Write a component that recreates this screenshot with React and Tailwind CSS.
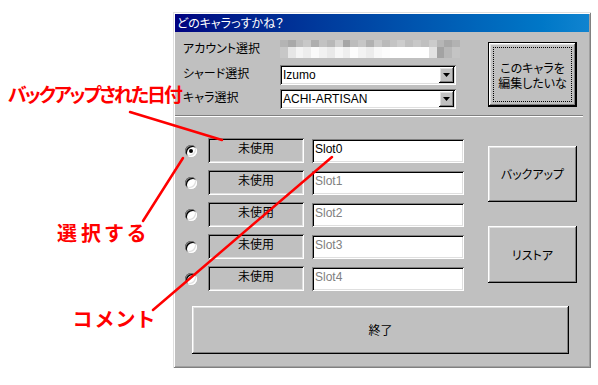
import React from 'react';

const jp = "font-['Noto_Sans_CJK_JP',sans-serif] [font-feature-settings:'palt']";
const raised =
  'shadow-[inset_-1px_-1px_#000,inset_1px_1px_#fff,inset_-2px_-2px_#808080,inset_2px_2px_#dfdfdf]';
const sunken =
  'shadow-[inset_1px_1px_#808080,inset_-1px_-1px_#fff,inset_2px_2px_#000,inset_-2px_-2px_#dfdfdf]';

const mosaicTop = [
  'bg-[#b4b4b4]', 'bg-[#a9a9a9]', 'bg-[#bdbdbd]', 'bg-[#c8c8c8]', 'bg-[#aeaeae]', 'bg-[#c2c2c2]',
  'bg-[#b8b8b8]', 'bg-[#cfcfcf]', 'bg-[#a6a6a6]', 'bg-[#bcbcbc]', 'bg-[#c6c6c6]', 'bg-[#b1b1b1]',
  'bg-[#c9c9c9]', 'bg-[#bababa]', 'bg-[#c4c4c4]', 'bg-[#cdcdcd]', 'bg-[#bfbfbf]', 'bg-[#c8c8c8]',
  'bg-[#c0c0c0]', 'bg-[#cbcbcb]', 'bg-[#b6b6b6]', 'bg-[#a8a8a8]', 'bg-[#b2b2b2]',
];
const mosaicBottom = [
  'bg-[#c7c7c7]', 'bg-[#e6e6e6]', 'bg-[#f4f4f4]', 'bg-[#ededed]', 'bg-[#fafafa]', 'bg-[#f1f1f1]',
  'bg-[#e9e9e9]', 'bg-[#f7f7f7]', 'bg-[#efefef]', 'bg-[#fdfdfd]', 'bg-[#f3f3f3]', 'bg-[#ececec]',
  'bg-[#f8f8f8]', 'bg-[#fcfcfc]', 'bg-white', 'bg-white', 'bg-white', 'bg-white',
  'bg-white', 'bg-[#e2e2e2]', 'bg-[#a3a3a3]', 'bg-[#b7b7b7]', 'bg-[#c4c4c4]',
];

function Combo({ value }) {
  return (
    <div className={`w-[176px] h-[20px] bg-white ${sunken} flex items-center`}>
      <span className="flex-1 pl-[3px] text-[12px] leading-[14px] text-black font-['Liberation_Sans',sans-serif]">
        {value}
      </span>
      <div className={`w-[15px] h-[16px] mr-[2px] bg-[#c0c0c0] ${raised} flex items-center justify-center`}>
        <svg width="7" height="4" viewBox="0 0 7 4">
          <path d="M0 0h7L3.5 4z" fill="#000" />
        </svg>
      </div>
    </div>
  );
}

function Radio({ checked }) {
  return (
    <div className="w-[12px] h-[12px] rounded-full bg-white shadow-[inset_1px_1px_#808080,inset_-1px_-1px_#fff,inset_2px_2px_#000,inset_-2px_-2px_#dfdfdf] flex items-center justify-center">
      {checked && <div className="w-[4px] h-[4px] rounded-full bg-black" />}
    </div>
  );
}

function SlotRow({ index }) {
  return (
    <div className="h-[25px] flex items-center">
      <Radio checked={index === 0} />
      <div className={`ml-[11px] w-[96px] h-[25px] bg-[#c0c0c0] ${sunken} pt-[3px] text-center text-[12px] leading-[14px] text-black ${jp}`}>
        未使用
      </div>
      <div
        className={`ml-[8px] w-[152px] h-[24px] bg-white ${sunken} pl-[3px] pt-[3px] text-[12px] leading-[14px] font-['Liberation_Sans',sans-serif] ${
          index === 0 ? 'text-black' : 'text-[#808080]'
        }`}
      >
        Slot{index}
      </div>
    </div>
  );
}

export default function App() {
  return (
    <div className="relative w-[598px] h-[385px] bg-white overflow-hidden">
      <div className="ml-[173px] mt-[12px] w-[418px] h-[356px] p-[2px] bg-[#c0c0c0] shadow-[inset_1px_1px_#dfdfdf,inset_-1px_-1px_#808080,inset_2px_2px_#fff,inset_-2px_-2px_#a0a0a0]">
        <div className={`h-[18px] bg-gradient-to-r from-[#000080] to-[#1084d0] text-white text-[12px] leading-[18px] pl-[2px] ${jp}`}>
          どのキャラっすかね？
        </div>

        <div className="flex pl-[8px] pt-[8px]">
          <div className="w-[277px] flex flex-col">
            <div className="h-[18px] flex items-start">
              <span className={`w-[97px] text-[12px] leading-[14px] mt-[1px] text-black ${jp}`}>アカウント選択</span>
              <div className="w-[180px] h-[18px] flex flex-col">
                <div className="flex h-[7px]">
                  {mosaicTop.map((c, i) => (
                    <div key={i} className={`flex-1 ${c}`} />
                  ))}
                </div>
                <div className="flex h-[11px]">
                  {mosaicBottom.map((c, i) => (
                    <div key={i} className={`flex-1 ${c}`} />
                  ))}
                </div>
              </div>
            </div>
            <div className="mt-[7px] h-[20px] flex items-start">
              <span className={`w-[97px] text-[12px] leading-[14px] mt-[1px] text-black ${jp}`}>シャード選択</span>
              <Combo value="Izumo" />
            </div>
            <div className="mt-[4px] h-[20px] flex items-start">
              <span className={`w-[97px] text-[12px] leading-[14px] mt-[1px] text-black ${jp}`}>キャラ選択</span>
              <Combo value="ACHI-ARTISAN" />
            </div>
          </div>
          <div className="ml-[28px] mt-[2px] w-[89px] h-[65px] border border-black bg-[#c0c0c0]">
            <div className={`w-full h-full ${raised} p-[4px]`}>
              <div className={`w-full h-full border border-dotted border-black flex items-center justify-center text-center text-[12px] leading-[15px] text-black ${jp}`}>
                <p>
                  このキャラを
                  <br />
                  編集したいな
                </p>
              </div>
            </div>
          </div>
        </div>

        <div className="mt-[6px] mr-[6px] border-t border-t-[#808080] border-b border-b-white" />

        <div className="flex mt-[21px] pl-[10px]">
          <div className="flex flex-col gap-[7px]">
            {[0, 1, 2, 3, 4].map((i) => (
              <SlotRow key={i} index={i} />
            ))}
          </div>
          <div className="ml-[24px] pt-[8px] flex flex-col gap-[24px]">
            <div className={`w-[89px] h-[56px] bg-[#c0c0c0] ${raised} flex items-center justify-center text-[12px] text-black ${jp}`}>
              バックアップ
            </div>
            <div className={`w-[89px] h-[57px] bg-[#c0c0c0] ${raised} flex items-center justify-center text-[12px] text-black ${jp}`}>
              リストア
            </div>
          </div>
        </div>

        <div className={`mt-[15px] ml-[17px] w-[377px] h-[48px] bg-[#c0c0c0] ${raised} flex items-center justify-center text-[12px] text-black ${jp}`}>
          終了
        </div>
      </div>

      <svg className="absolute inset-0 pointer-events-none" width="598" height="385">
        <g stroke="#ff0000" strokeWidth="2.5" strokeLinecap="round">
          <line x1="130" y1="112" x2="222" y2="140" />
          <line x1="143" y1="221" x2="183" y2="158" />
          <line x1="153" y1="310" x2="332" y2="157" />
        </g>
      </svg>

      <div className={`absolute left-[8px] top-[81px] text-[19px] leading-[26px] font-bold text-[#ff0000] tracking-[-2px] ${jp}`}>
        バックアップされた日付
      </div>
      <div className={`absolute left-[57px] top-[220px] text-[20px] leading-[26px] font-bold text-[#ff0000] tracking-[4px] ${jp}`}>
        選択する
      </div>
      <div className={`absolute left-[73px] top-[306px] text-[20px] leading-[26px] font-bold text-[#ff0000] tracking-[3px] ${jp}`}>
        コメント
      </div>
    </div>
  );
}
